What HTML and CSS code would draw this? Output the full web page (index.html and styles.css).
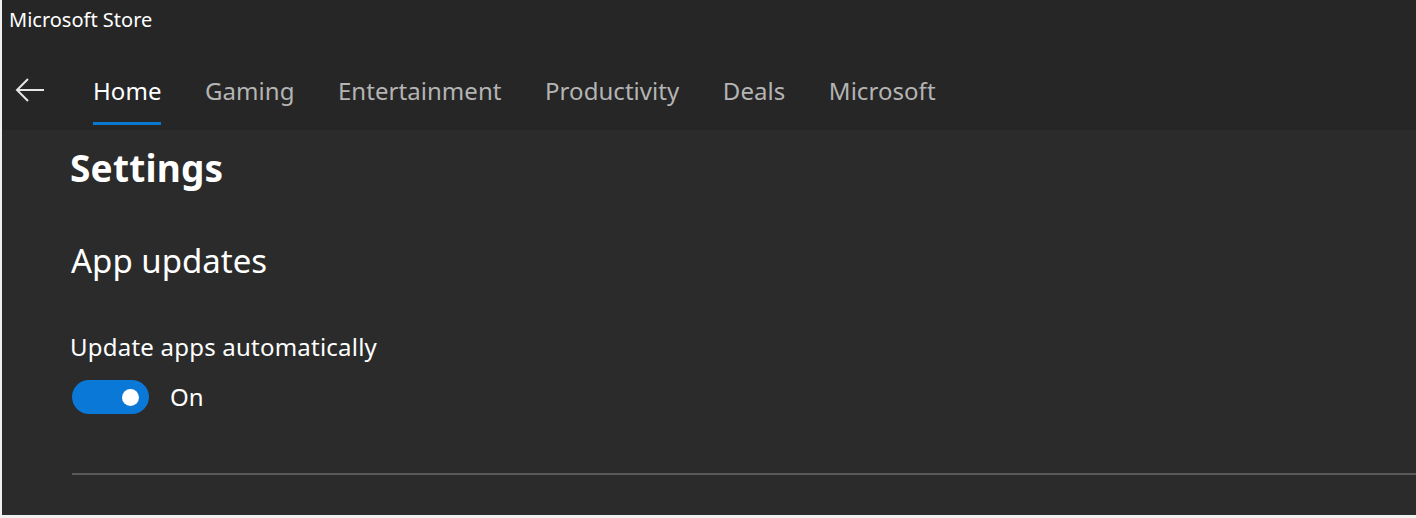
FILE: index.html
```html
<!DOCTYPE html>
<html lang="en">
<head>
<meta charset="utf-8">
<title>Microsoft Store</title>
<link rel="stylesheet" href="styles.css">
</head>
<body>
<div class="window">
  <header class="top">
    <div class="titlebar">Microsoft Store</div>
    <nav class="nav">
      <button class="back" aria-label="Back">
        <svg width="30" height="24" viewBox="0 0 30 24"><path d="M29 12H2M13 1L2 12l11 11" fill="none" stroke="#e6e6e6" stroke-width="2"/></svg>
      </button>
      <ul class="tabs">
        <li class="tab active">Home</li>
        <li class="tab">Gaming</li>
        <li class="tab">Entertainment</li>
        <li class="tab">Productivity</li>
        <li class="tab">Deals</li>
        <li class="tab">Microsoft</li>
      </ul>
    </nav>
  </header>
  <main class="content">
    <h1 class="page-title">Settings</h1>
    <h2 class="section-title">App updates</h2>
    <div class="setting">
      <div class="setting-label">Update apps automatically</div>
      <div class="toggle-row">
        <span class="toggle"><span class="knob"></span></span>
        <span class="toggle-text">On</span>
      </div>
    </div>
    <hr class="divider">
  </main>
</div>
</body>
</html>
```

FILE: styles.css
```css
* { box-sizing: border-box; }
html, body { margin: 0; padding: 0; background: #2b2b2b; }
body {
  font-family: "Noto Sans", "Open Sans", sans-serif;
  color: #ffffff;
  width: 1416px;
  height: 518px;
  overflow: hidden;
}
.window {
  height: 518px;
  border-left: 2px solid #f0f0f0;
  border-bottom: 3px solid #f0f0f0;
  background: #2b2b2b;
  display: flex;
  flex-direction: column;
}
.top {
  background: #262626;
  height: 130px;
}
.titlebar {
  height: 42px;
  padding: 8px 0 0 7px;
  font-size: 20px;
  line-height: 24px;
  color: #ffffff;
}
.nav {
  display: flex;
  align-items: flex-start;
  height: 88px;
}
.back {
  background: none;
  border: 0;
  padding: 0;
  margin: 36px 0 0 13px;
  width: 30px;
  height: 24px;
  display: flex;
}
.tabs {
  list-style: none;
  margin: 0 0 0 48px;
  padding: 0;
  display: flex;
  gap: 43.5px;
}
.tab {
  font-size: 24px;
  line-height: 32px;
  padding-top: 33px;
  height: 83px;
  color: #b4b4b4;
  letter-spacing: 0.05px;
}
.tab.active {
  color: #ffffff;
  border-bottom: 3px solid #0a78d2;
}
.content {
  padding: 0 0 0 68px;
  flex: 1;
}
.page-title {
  margin: 14px 0 0 0;
  font-size: 37px;
  line-height: 48px;
  font-weight: 700;
  letter-spacing: 0.2px;
}
.section-title {
  margin: 49px 0 0 1px;
  font-size: 33px;
  line-height: 40px;
  font-weight: 400;
}
.setting { margin-top: 50px; }
.setting-label {
  font-size: 24px;
  line-height: 32px;
  letter-spacing: 0.22px;
}
.toggle-row {
  display: flex;
  align-items: center;
  margin-top: 17px;
}
.toggle {
  width: 77px;
  height: 34px;
  margin-left: 2px;
  border-radius: 17px;
  background: #0a78d7;
  display: flex;
  align-items: center;
  justify-content: flex-end;
  padding-right: 10px;
}
.knob {
  width: 17px;
  height: 17px;
  border-radius: 50%;
  background: #ffffff;
}
.toggle-text {
  font-size: 24px;
  line-height: 32px;
  margin-left: 21px;
}
.divider {
  border: 0;
  height: 2px;
  background: #5a5a5a;
  margin: 59px 0 0 2px;
}
```
